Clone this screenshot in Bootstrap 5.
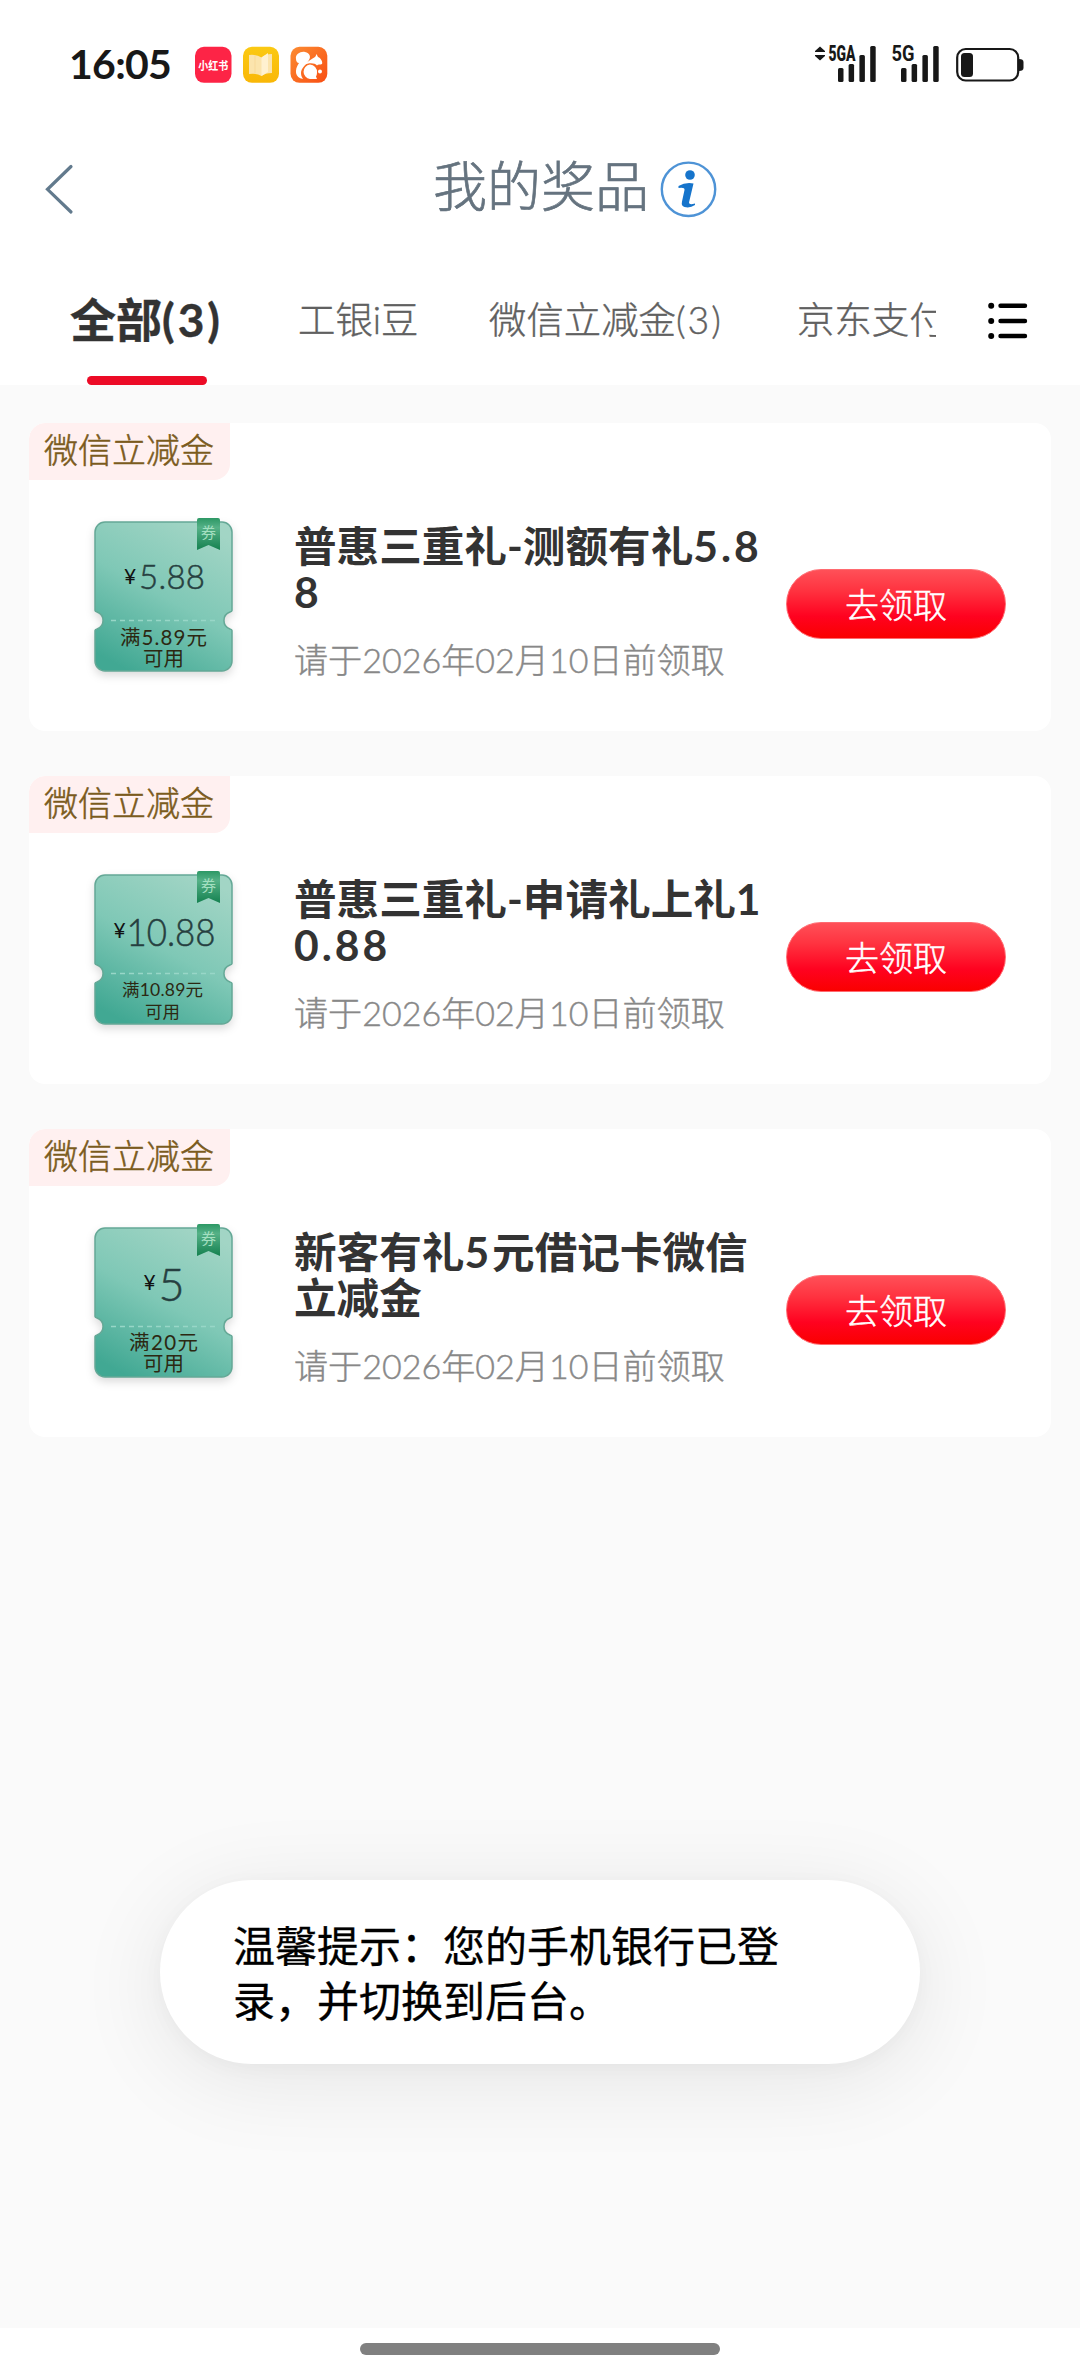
<!DOCTYPE html>
<html lang="zh-CN">
<head>
<meta charset="utf-8">
<meta name="viewport" content="width=device-width, initial-scale=1">
<title>我的奖品</title>
<link rel="stylesheet" href="https://cdn.jsdelivr.net/npm/bootstrap@5.3.0/dist/css/bootstrap.min.css">
<style>
  body { font-family: Lato, "Noto Sans CJK SC", sans-serif; background: #fafafa; color: #333; font-weight: 300; }
  .screen { width: 1080px; height: 2376px; overflow: hidden; }
  svg { display: block; flex: none; overflow: visible; }
  .status { height: 130px; padding: 46px 56px 0 69px; }
  .clock { font: 700 41px/38px Lato, sans-serif; color: #181818; letter-spacing: -.7px; width: 126px; margin-top: -1px; }
  .titlebar { height: 125px; padding-left: 42px; }
  .titlebar h1 { font-size: 54px; line-height: 64px; font-weight: 300; color: #65737f; margin-left: 357px; margin-top: 25px; -webkit-text-stroke: .7px; }
  .tabs { height: 130px; }
  .tab-strip { width: 936px; height: 130px; padding-left: 70px; }
  .tab-strip .nav-link { padding: 40px 0 0; font-size: 37.4px; line-height: 50px; color: #606060; white-space: nowrap; flex: none; -webkit-text-stroke: .4px; }
  .tab-strip .nav-link.active { font-size: 46px; font-weight: 700; color: #333; width: 153px; height: 130px; margin-right: 75px; }
  .tab-strip .bar { width: 120px; height: 9px; background: #ec0b26; margin: 31px auto 0; border-radius: 5px; }
  .wide { letter-spacing: 3px; }
  .wider { letter-spacing: 2px; }
  .prizes { padding: 38px 29px 0; gap: 45px; height: 1943px; }
  .prize { height: 308px; border: 0; border-radius: 16px; background: #fff; overflow: hidden; }
  .prize-tag { width: 201px; height: 57px; background: #fff0f0; border-radius: 16px 0 16px 0; color: #7b5b1d; font-size: 34px; line-height: 54px; padding-left: 15px; white-space: nowrap; -webkit-text-stroke: .5px; }
  .coupon { margin: 34px 0 0 60px; }
  .prize-text { width: 485px; margin: 43px 7px 0 55px; white-space: nowrap; }
  .prize-text h2 { font-size: 42.6px; line-height: 46px; font-weight: 700; color: #333; margin: 0; }
  .prize-text p { font-size: 34.1px; line-height: 46px; color: #888; margin: 22px 0 0; -webkit-text-stroke: .4px; }
  .claim { width: 220px; height: 70px; margin-top: 89px; padding: 0; border: 1px solid #ff6a70; border-radius: 35px; background: linear-gradient(#ff5058, #ff3340 30%, #ff0220 68%, #fa0000); color: #fff; font-size: 34px; line-height: 65px; font-weight: 300; -webkit-text-stroke: .5px; }
  .hint { left: 160px; top: 1880px; width: 760px; height: 184px; border-radius: 92px; background: #fff; box-shadow: 0 14px 90px rgba(0,0,0,.09), 0 4px 20px rgba(0,0,0,.03); padding: 39px 73px; color: #000; font-size: 42px; line-height: 55px; font-weight: 400; white-space: nowrap; -webkit-text-stroke: .3px #000; }
  .homebar { height: 48px; background: #fff; padding-top: 15px; }
  .homebar div { width: 360px; height: 12px; border-radius: 6px; background: #808080; }
</style>
<script src="https://cdn.jsdelivr.net/npm/bootstrap@5.3.0/dist/js/bootstrap.bundle.min.js"></script>
</head>
<body>
<!-- shared coupon artwork -->
<svg width="0" height="0" style="position:absolute">
  <defs>
    <linearGradient id="mint" x1=".75" y1="0" x2=".25" y2="1"><stop offset="0" stop-color="#a2d5c5"/><stop offset=".5" stop-color="#7fc8b6"/><stop offset="1" stop-color="#41a893"/></linearGradient>
    <linearGradient id="ribbon" x1="0" y1="0" x2="0" y2="1"><stop offset="0" stop-color="#2d9865"/><stop offset=".3" stop-color="#55b187"/><stop offset="1" stop-color="#158150"/></linearGradient>
    <g id="coupon">
      <path d="M16 8H133a10 10 0 0 1 10 10V96.500q0 1-2 1.500a9 9 0 0 0 0 17q2 .5 2 1.500V147a10 10 0 0 1-10 10H16a10 10 0 0 1-10-10V116.500q0-1 2-1.500a9 9 0 0 0 0-17q-2-.5-2-1.500V18a10 10 0 0 1 10-10z" fill="url(#mint)" stroke="#64a896" stroke-width="1.500" style="filter:drop-shadow(0 4px 4px rgba(0,0,0,.14))"/>
      <path d="M22 106.500H129" stroke="#98d6c7" stroke-width="1.600" stroke-dasharray="5 4"/>
      <path d="M108 6q0-2 2-2h19q2 0 2 2v30l-11.500-5-11.500 5z" fill="url(#ribbon)"/>
      <text x="119.500" y="24" font-size="15" font-weight="400" text-anchor="middle" fill="#a3dfc0">券</text>
    </g>
  </defs>
</svg>

<main class="screen position-relative d-flex flex-column">
  <header class="bg-white">
    <div class="status d-flex align-items-start">
      <div class="clock">16:05</div>
      <svg width="133" height="38" viewBox="0 0 133 38">
        <defs>
          <linearGradient id="gold" x1="0" y1="0" x2="0" y2="1"><stop stop-color="#fbc913"/><stop offset="1" stop-color="#f9b707"/></linearGradient>
          <linearGradient id="orange" x1="0" y1="0" x2="1" y2="1"><stop stop-color="#fc8c32"/><stop offset="1" stop-color="#f84e13"/></linearGradient>
        </defs>
        <rect x="0" y=".8" width="36.500" height="36" rx="9" fill="#fd2446"/>
        <text x="18.200" y="23.500" font-size="11.500" font-weight="700" text-anchor="middle" textLength="30" lengthAdjust="spacingAndGlyphs" fill="#fff">小红书</text>
        <rect x="48" y=".8" width="36" height="36" rx="9" fill="url(#gold)"/>
        <path d="M54 9q7-1 12.500 2.500Q70 8 77 8v19q-7 0-10.500 3Q62 27 54 28z" fill="#fbe4ad"/>
        <path d="M66.500 11.500L73 7v19l-6.500 4z" fill="#fff1d0"/>
        <path d="M60 9.500v18" stroke="#f7d99a"/>
        <rect x="95.500" y=".8" width="36.800" height="36" rx="9" fill="url(#orange)"/>
        <path d="M101 13C100 8 106 5 110 6c5 1 6 5 4 8-3 5-8 8-8 13 0 3 1 4 2 6-8-1-9-9-4-16-2 0-3-2-3-4z" fill="#fff"/>
        <path d="M109 19c4-4 8-6 11-8 1-1 1-2 1.500-3l1.500 3c3 1 5 5 4 7-2 1-4 0-5 1.500-2-2.500-8-3-13-.5z" fill="#fff"/>
        <path d="M115 18.500a7.500 7.500 0 0 1 7 8c0 2-.5 3-1 4l1 2.500h-7a7.300 7.300 0 0 1 0-14.500z" fill="#fff"/>
        <circle cx="125" cy="25.500" r="2" fill="#fff"/>
      </svg>
      <svg class="ms-auto" width="209" height="38" viewBox="0 0 209 38" fill="#181818">
        <path d="M0 5L5 .5 10 5v1H0zM0 9h10v1l-5 4.500L0 10z"/>
        <g font-family="Roboto,sans-serif" font-weight="900" font-size="21.500">
          <text x="13.500" y="14.800" textLength="27" lengthAdjust="spacingAndGlyphs">5GA</text>
          <text x="76.500" y="14.800" font-weight="700" textLength="23" lengthAdjust="spacingAndGlyphs">5G</text>
        </g>
        <g id="signal"><rect x="23" y="22" width="5.500" height="14" rx="1.500"/><rect x="33.600" y="18" width="5.500" height="18" rx="1.500"/><rect x="44.400" y="9" width="5.500" height="27" rx="1.500"/><rect x="55.200" y="0" width="5.500" height="36" rx="1.500"/></g>
        <use href="#signal" x="63"/>
        <rect x="142.200" y="3" width="61" height="31.500" rx="8.500" fill="none" stroke="#181818" stroke-width="2.200"/>
        <rect x="146" y="7" width="12" height="24" rx="3.500"/>
        <path d="M204 13c3 0 4.500 1 4.500 3v6c0 2-1.500 3-4.500 3z"/>
      </svg>
    </div>
    <div class="titlebar d-flex align-items-start">
      <svg width="34" height="95" viewBox="0 0 34 95"><path d="M29 36.500L5.500 59.300 29 82" fill="none" stroke="#627a8d" stroke-width="3.200" stroke-linecap="round"/></svg>
      <h1>我的奖品</h1>
      <svg width="80" height="100" viewBox="0 0 80 100">
        <circle cx="39.500" cy="59.300" r="26.700" fill="none" stroke="#4e93d6" stroke-width="2.400"/>
        <circle cx="41" cy="45" r="4.800" fill="#1674cb"/>
        <path d="M29.500 56q7-4 15-2.500l-4.500 19q0 3 6 1v1.500q-5 3.500-10.500 2-3.500-1-2.500-5.500l2.500-11.500q.5-3-6-2z" fill="#1674cb"/>
      </svg>
    </div>
    <div class="tabs d-flex">
      <nav class="tab-strip nav flex-nowrap overflow-hidden">
        <a class="nav-link active">全部<span class="wide">(3)</span><div class="bar"></div></a>
        <a class="nav-link" style="width:191px">工银i豆</a>
        <a class="nav-link" style="width:308px">微信立减金<span class="wider">(3)</span></a>
        <a class="nav-link">京东支付</a>
      </nav>
      <svg width="100" height="130" viewBox="0 0 100 130">
        <g stroke="#000" stroke-width="4.400" stroke-linecap="round"><path d="M64.500 50.700H89M64.500 66H89M64.500 81H89"/></g>
        <circle cx="55.200" cy="50.700" r="3"/><circle cx="55.200" cy="66" r="3"/><circle cx="55.200" cy="81" r="3"/>
      </svg>
    </div>
  </header>

  <section class="prizes d-flex flex-column">
    <article class="prize card">
      <div class="prize-tag">微信立减金</div>
      <div class="d-flex align-items-start">
        <svg class="coupon" width="150" height="170" viewBox="0 0 150 170">
          <use href="#coupon"/>
          <text x="35" y="70" font-size="21" font-weight="400" fill="#111">¥</text>
          <text x="50" y="75" font-size="33" textLength="66" fill="#263f40" stroke="#263f40" stroke-width=".5">5.88</text>
          <g font-size="20.500" font-weight="400" text-anchor="middle" fill="#2c2812"><text x="74.500" y="130.500" textLength="87">满5.89元</text><text x="74.500" y="151.500">可用</text></g>
        </svg>
        <div class="prize-text"><h2>普惠三重礼-测额有礼<span class="wide">5.8</span><br>8</h2><p>请于2026年02月10日前领取</p></div>
        <button class="claim btn">去领取</button>
      </div>
    </article>
    <article class="prize card">
      <div class="prize-tag">微信立减金</div>
      <div class="d-flex align-items-start">
        <svg class="coupon" width="150" height="170" viewBox="0 0 150 170">
          <use href="#coupon"/>
          <text x="24.500" y="71" font-size="21" font-weight="400" fill="#111">¥</text>
          <text x="37.500" y="79" font-size="37" textLength="89" lengthAdjust="spacingAndGlyphs" fill="#263f40" stroke="#263f40" stroke-width=".5">10.88</text>
          <g font-size="17.500" font-weight="400" text-anchor="middle" fill="#2c2812"><text x="73.500" y="128.500" textLength="81">满10.89元</text><text x="73.500" y="151">可用</text></g>
        </svg>
        <div class="prize-text"><h2>普惠三重礼-申请礼上礼1<br><span class="wide">0.88</span></h2><p>请于2026年02月10日前领取</p></div>
        <button class="claim btn">去领取</button>
      </div>
    </article>
    <article class="prize card">
      <div class="prize-tag">微信立减金</div>
      <div class="d-flex align-items-start">
        <svg class="coupon" width="150" height="170" viewBox="0 0 150 170">
          <use href="#coupon"/>
          <text x="54.500" y="70" font-size="21" font-weight="400" fill="#111">¥</text>
          <text x="69.500" y="80.500" font-size="45" fill="#263f40" stroke="#263f40" stroke-width=".5">5</text>
          <g font-size="20.500" font-weight="400" text-anchor="middle" fill="#2c2812"><text x="74.500" y="130" textLength="69">满20元</text><text x="74.500" y="151">可用</text></g>
        </svg>
        <div class="prize-text"><h2>新客有礼<span class="wide">5</span>元借记卡微信<br>立减金</h2><p>请于2026年02月10日前领取</p></div>
        <button class="claim btn">去领取</button>
      </div>
    </article>
  </section>

  <footer class="homebar d-flex justify-content-center"><div></div></footer>

  <div class="hint position-absolute">温馨提示：您的手机银行已登<br>录，并切换到后台。</div>
</main>
</body>
</html>
